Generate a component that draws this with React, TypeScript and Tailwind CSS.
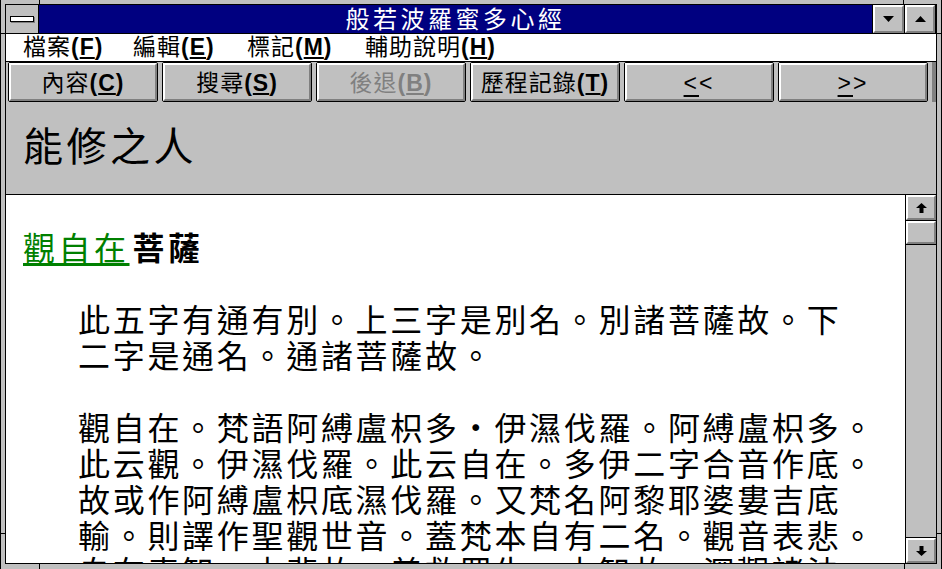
import React from 'react';

// Win 3.1 help window: 般若波羅蜜多心經
const FONT = "font-['Liberation_Sans','Noto_Sans_CJK_TC',sans-serif]";

function Key({ k }: { k: string }) {
  return (
    <span className="font-bold font-['Liberation_Sans',sans-serif]">
      (<span className="underline underline-offset-2">{k}</span>)
    </span>
  );
}

function ToolButton({ label, k, disabled }: { label: React.ReactNode; k?: string; disabled?: boolean }) {
  return (
    <div className="w-[150px] h-[40px] border border-black rounded-[2px]">
      <div
        className={`h-full border-t-2 border-l-2 border-t-white border-l-white border-b-2 border-r-2 border-b-[#808080] border-r-[#808080] bg-[#c0c0c0] flex items-center justify-center pt-[2px] text-[23px] leading-none tracking-[1px] ${
          disabled ? 'text-[#808080]' : 'text-black'
        }`}
      >
        {label}
        {k && <Key k={k} />}
      </div>
    </div>
  );
}

function Arrow({ up }: { up?: boolean }) {
  return (
    <svg width="11" height="10" viewBox="0 0 11 10" className={up ? '' : 'rotate-180'}>
      <polygon points="5.5,0 11,5 7.5,5 7.5,10 3.5,10 3.5,5 0,5" fill="black" />
    </svg>
  );
}

function Tri({ up }: { up?: boolean }) {
  return (
    <svg width="11" height="6" viewBox="0 0 11 6">
      {up ? (
        <polygon points="5.5,0 11,6 0,6" fill="black" />
      ) : (
        <polygon points="0,0 11,0 5.5,6" fill="black" />
      )}
    </svg>
  );
}

const body1 = ['此五字有通有別。上三字是別名。別諸菩薩故。下', '二字是通名。通諸菩薩故。'];
const body2 = [
  '觀自在。梵語阿縛盧枳多・伊濕伐羅。阿縛盧枳多。',
  '此云觀。伊濕伐羅。此云自在。多伊二字合音作底。',
  '故或作阿縛盧枳底濕伐羅。又梵名阿黎耶婆婁吉底',
  '輸。則譯作聖觀世音。蓋梵本自有二名。觀音表悲。',
  '自在表智。由悲故。普救眾生。由智故。深觀諸法。',
];

export default function App() {
  return (
    <div className={`relative w-[942px] h-[569px] bg-[#c0c0c0] border-l border-r border-black pt-[4px] pl-[4px] pr-[4px] pb-[5px] overflow-hidden ${FONT}`}>
      {/* frame corner marks */}
      <div className="absolute left-0 top-[33px] w-[5px] h-px bg-black" />
      <div className="absolute right-0 top-[33px] w-[5px] h-px bg-black" />
      <div className="absolute left-0 top-[533px] w-[5px] h-px bg-black" />
      <div className="absolute right-0 top-[533px] w-[5px] h-px bg-black" />
      <div className="absolute left-[38px] top-0 w-px h-[4px] bg-black" />
      <div className="absolute left-[902px] top-0 w-px h-[4px] bg-black" />
      <div className="absolute left-[38px] bottom-0 w-px h-[5px] bg-black" />
      <div className="absolute left-[903px] bottom-0 w-px h-[5px] bg-black" />

      <div className="h-full border border-black flex flex-col">
        {/* title bar */}
        <div className="h-[29px] border-b border-black flex">
          <div className="w-[33px] border-r border-black bg-[#c0c0c0] flex items-center justify-center">
            <div className="relative w-[24px] h-[6px]">
              <div className="absolute left-[1px] top-[1px] w-[24px] h-[6px] bg-[#808080]" />
              <div className="absolute inset-0 bg-white border border-black" />
            </div>
          </div>
          <div className="flex-1 bg-[#000080] text-white flex items-center justify-center text-[24px] leading-none tracking-[3.5px] pt-[2px]">
            般若波羅蜜多心經
          </div>
          <div className="w-[32px] border-l border-black">
            <div className="h-full border-t-2 border-l-2 border-t-white border-l-white border-b-2 border-r-2 border-b-[#808080] border-r-[#808080] bg-[#c0c0c0] flex items-center justify-center">
              <Tri />
            </div>
          </div>
          <div className="w-[32px] border-l border-r border-black">
            <div className="h-full border-t-2 border-l-2 border-t-white border-l-white border-b-2 border-r-2 border-b-[#808080] border-r-[#808080] bg-[#c0c0c0] flex items-center justify-center">
              <Tri up />
            </div>
          </div>
        </div>

        {/* menu bar */}
        <div className="h-[28px] border-b border-black bg-white flex items-center pl-[17px] text-[23px] leading-none tracking-[1px] text-black">
          <span className="w-[110px]">檔案<Key k="F" /></span>
          <span className="w-[114px]">編輯<Key k="E" /></span>
          <span className="w-[118px]">標記<Key k="M" /></span>
          <span>輔助說明<Key k="H" /></span>
        </div>

        {/* button bar */}
        <div className="h-[40px] flex gap-[4px] pl-[2px] bg-[#c0c0c0]">
          <ToolButton label="內容" k="C" />
          <ToolButton label="搜尋" k="S" />
          <ToolButton label="後退" k="B" disabled />
          <ToolButton label="歷程記錄" k="T" />
          <ToolButton
            label={
              <span className="font-['Liberation_Sans',sans-serif] tracking-[2px]">
                <span className="underline underline-offset-4">&lt;</span>&lt;
              </span>
            }
          />
          <ToolButton
            label={
              <span className="font-['Liberation_Sans',sans-serif] tracking-[2px]">
                <span className="underline underline-offset-4">&gt;</span>&gt;
              </span>
            }
          />
          <div className="flex-1 bg-[#808080]" />
        </div>

        {/* topic title */}
        <div className="h-[93px] border-b border-black bg-[#c0c0c0] flex items-center pl-[17px] pb-[2px]">
          <span className="text-[40px] leading-none tracking-[3.5px] text-black">能修之人</span>
        </div>

        {/* content */}
        <div className="h-[368px] flex">
          <div className="flex-1 bg-white overflow-hidden text-black">
            <div className="pl-[17px] pt-[36px] text-[32px] leading-[36px] tracking-[3.5px] whitespace-nowrap">
              <span className="text-[#008000] underline decoration-[#008000] underline-offset-[3px]">觀自在</span>
              <span className="font-bold ml-[3px]">菩薩</span>
            </div>
            <div className="pl-[72px] mt-[36px] text-[32px] leading-[36px] tracking-[2.7px] whitespace-nowrap">
              {body1.map(l => (
                <div key={l}>{l}</div>
              ))}
              <div className="h-[36px]" />
              {body2.map(l => (
                <div key={l}>{l}</div>
              ))}
            </div>
          </div>

          {/* scrollbar */}
          <div className="w-[31px] border-l border-black bg-[#c0c0c0] flex flex-col">
            <div className="h-[26px] border-b border-black">
              <div className="h-full border-t-2 border-l-2 border-t-white border-l-white border-b-2 border-r-2 border-b-[#808080] border-r-[#808080] flex items-center justify-center">
                <Arrow up />
              </div>
            </div>
            <div className="h-[24px] border-b border-black">
              <div className="h-full border-t-2 border-l-2 border-t-white border-l-white border-b-2 border-r-2 border-b-[#808080] border-r-[#808080]" />
            </div>
            <div className="flex-1" />
            <div className="h-[26px] border-t border-black">
              <div className="h-full border-t-2 border-l-2 border-t-white border-l-white border-b-2 border-r-2 border-b-[#808080] border-r-[#808080] flex items-center justify-center">
                <Arrow />
              </div>
            </div>
          </div>
        </div>
      </div>
    </div>
  );
}
